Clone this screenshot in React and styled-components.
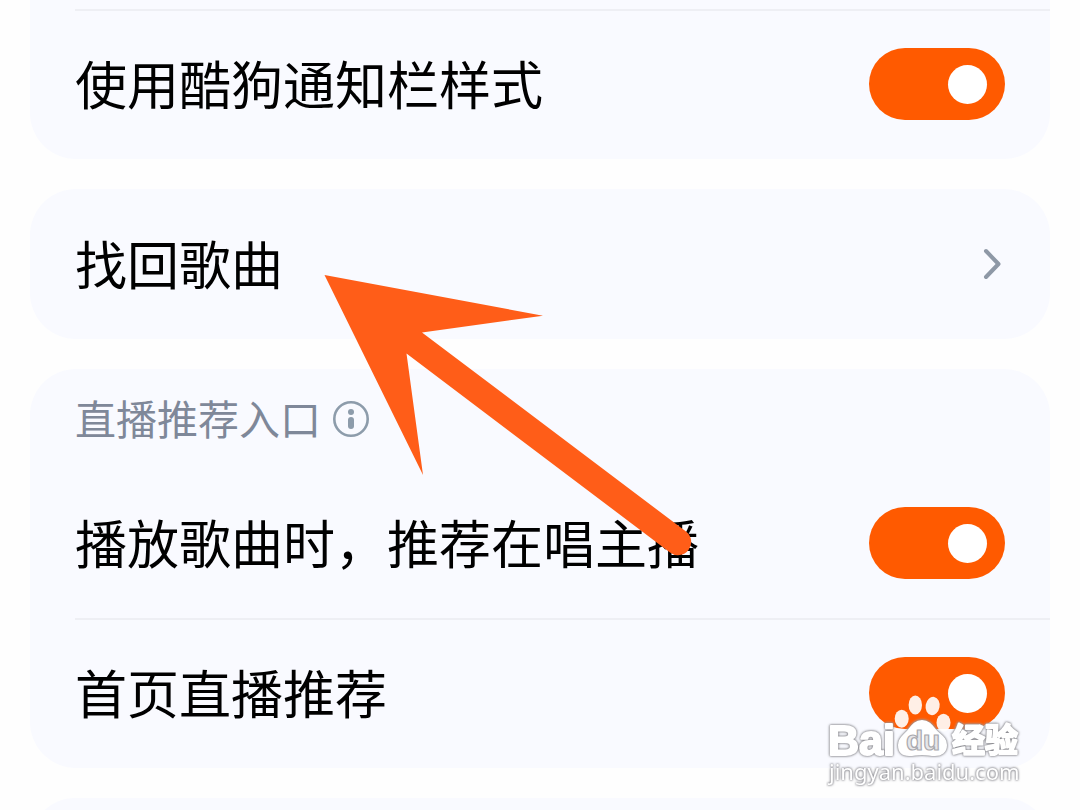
import React, { useState } from 'react';
import styled, { createGlobalStyle } from 'styled-components';

const GlobalStyle = createGlobalStyle`
  * {
    box-sizing: border-box;
  }

  body {
    margin: 0;
    background: #fefefe;
    color: #000;
    font-family: "Noto Sans CJK SC", sans-serif;
  }
`;

const Page = styled.main`
  position: relative;
  display: flex;
  flex-direction: column;
  gap: 30px;
  height: 100vh;
  padding: 0 30px;
  overflow: hidden;
`;

const Card = styled.section`
  flex: none;
  min-height: ${props => props.$peek ? '90px' : '0'};
  padding-top: ${props => props.$continued ? '9px' : '0'};
  padding-left: 45px;
  border-radius: ${props => props.$continued ? '0 0 46px 46px' : '46px'};
  background: #f9faff;
`;

const Row = styled.div`
  display: flex;
  align-items: center;
  justify-content: space-between;
  min-height: 150px;
  padding-right: 45px;
  padding-bottom: ${props => props.$divided ? '2px' : '0'};
  border-top: ${props => props.$divided ? '2px solid #eeeff4' : 'none'};
`;

const RowText = styled.span`
  padding-bottom: 2px;
  font-size: 52px;
  line-height: 72px;
`;

const RowLink = styled.a`
  display: flex;
  flex: 1;
  align-items: center;
  justify-content: space-between;
  color: inherit;
  text-decoration: none;
`;

const Switch = styled.input`
  appearance: none;
  display: flex;
  flex: none;
  align-items: center;
  justify-content: ${props => props.checked ? 'flex-end' : 'flex-start'};
  width: 136px;
  height: 72px;
  margin: 0;
  padding: 0 18px;
  border-radius: 36px;
  background: ${props => props.checked ? '#ff5a00' : '#d5d8df'};
  cursor: pointer;

  &::before {
    content: '';
    width: 39px;
    height: 39px;
    border-radius: 50%;
    background: #fff;
  }
`;

const CardHeader = styled.header`
  display: flex;
  align-items: center;
  gap: 12px;
  height: 99px;
  color: #7f8899;
`;

const CardTitle = styled.h2`
  margin: 0;
  padding-bottom: 4px;
  font-size: 41px;
  font-weight: 400;
  line-height: 60px;
`;

const InfoButton = styled.button`
  display: flex;
  padding: 0;
  border: 0;
  background: none;
  color: #8d9cab;
`;

const Arrow = styled.svg`
  position: absolute;
  top: 270px;
  left: 320px;
  pointer-events: none;
`;

const Watermark = styled.svg`
  position: absolute;
  right: 50px;
  bottom: 16px;
  pointer-events: none;
`;

const Outlined = styled.g`
  fill: #fff;
  stroke: #fff;
  stroke-linejoin: round;
  filter: drop-shadow(0 0 1px #77777d) drop-shadow(0 0 1px #b8b8bd);
`;

const SwitchRow = ({ id, label, divided }) => {
  const [checked, setChecked] = useState(true);

  return (
    <Row $divided={divided}>
      <RowText as="label" htmlFor={id}>{label}</RowText>
      <Switch
        id={id}
        type="checkbox"
        role="switch"
        checked={checked}
        onChange={() => setChecked(!checked)}
      />
    </Row>
  );
};

const Chevron = () => (
  <svg width="26" height="36" viewBox="0 0 26 36" fill="none" aria-hidden="true">
    <path d="M7 5 L19.5 18 L7 31" stroke="#8e98a6" strokeWidth="4" strokeLinecap="round" strokeLinejoin="round" />
  </svg>
);

const InfoIcon = () => (
  <svg width="36" height="36" viewBox="0 0 36 36" fill="none" aria-hidden="true">
    <circle cx="18" cy="18" r="16.7" stroke="currentColor" strokeWidth="2.6" />
    <circle cx="18" cy="11" r="3" fill="currentColor" />
    <rect x="15" y="16" width="6" height="12" rx="3" fill="currentColor" />
  </svg>
);

const PointerArrow = () => (
  <Arrow width="380" height="290" viewBox="320 270 380 290" aria-hidden="true">
    <path
      d="M324.5 275 L543 315.7 L422 332.5 L686 531.5 A13 13 0 0 1 670 552.5 L406.5 353.5 L423 475 Z"
      fill="#ff5d18"
    />
  </Arrow>
);

const BaiduMark = () => (
  <Watermark width="204" height="100" viewBox="826 694 204 100">
    <g fill="#fff" fillOpacity="0.9">
      <ellipse cx="901.7" cy="718.7" rx="7" ry="9" />
      <ellipse cx="915.3" cy="705" rx="6.7" ry="9.5" />
      <ellipse cx="932.6" cy="706" rx="7" ry="9.2" transform="rotate(10 932.6 706)" />
      <ellipse cx="943.5" cy="722.7" rx="7" ry="9" />
    </g>
    <Outlined strokeWidth="2">
      <path d="M922 721 C929 721 932 726 936 731 C941 736 946 738 946 745 C946 752 941 755 935 755 C930 755 927 754 922 754 C917 754 914 755 909 755 C903 755 899 752 899 745 C899 738 904 736 908 731 C912 726 915 721 922 721 Z" />
      <text x="828" y="755" fontSize="43" fontWeight="700" fontFamily="Liberation Sans, sans-serif">Bai</text>
      <text x="952" y="752" fontSize="33" fontWeight="700" fontFamily="Noto Sans CJK SC, sans-serif">经验</text>
    </Outlined>
    <text
      x="906"
      y="750"
      fontSize="28"
      fontWeight="700"
      fontFamily="Liberation Sans, sans-serif"
      fill="#e6e6e9"
      stroke="#a9a9ae"
      strokeWidth="1.2"
    >
      du
    </text>
    <Outlined strokeWidth="0">
      <text x="829" y="780" fontSize="22" fontFamily="Noto Sans, sans-serif">jingyan.baidu.com</text>
    </Outlined>
  </Watermark>
);

export default function App() {
  return (
    <>
      <GlobalStyle />
      <Page>
        <Card $continued>
          <SwitchRow id="notification-style" label="使用酷狗通知栏样式" divided />
        </Card>
        <Card>
          <Row>
            <RowLink href="#recover">
              <RowText>找回歌曲</RowText>
              <Chevron />
            </RowLink>
          </Row>
        </Card>
        <Card>
          <CardHeader>
            <CardTitle>直播推荐入口</CardTitle>
            <InfoButton type="button" aria-label="说明">
              <InfoIcon />
            </InfoButton>
          </CardHeader>
          <SwitchRow id="playing-live" label="播放歌曲时，推荐在唱主播" />
          <SwitchRow id="home-live" label="首页直播推荐" divided />
        </Card>
        <Card $peek />
        <PointerArrow />
        <BaiduMark />
      </Page>
    </>
  );
}
